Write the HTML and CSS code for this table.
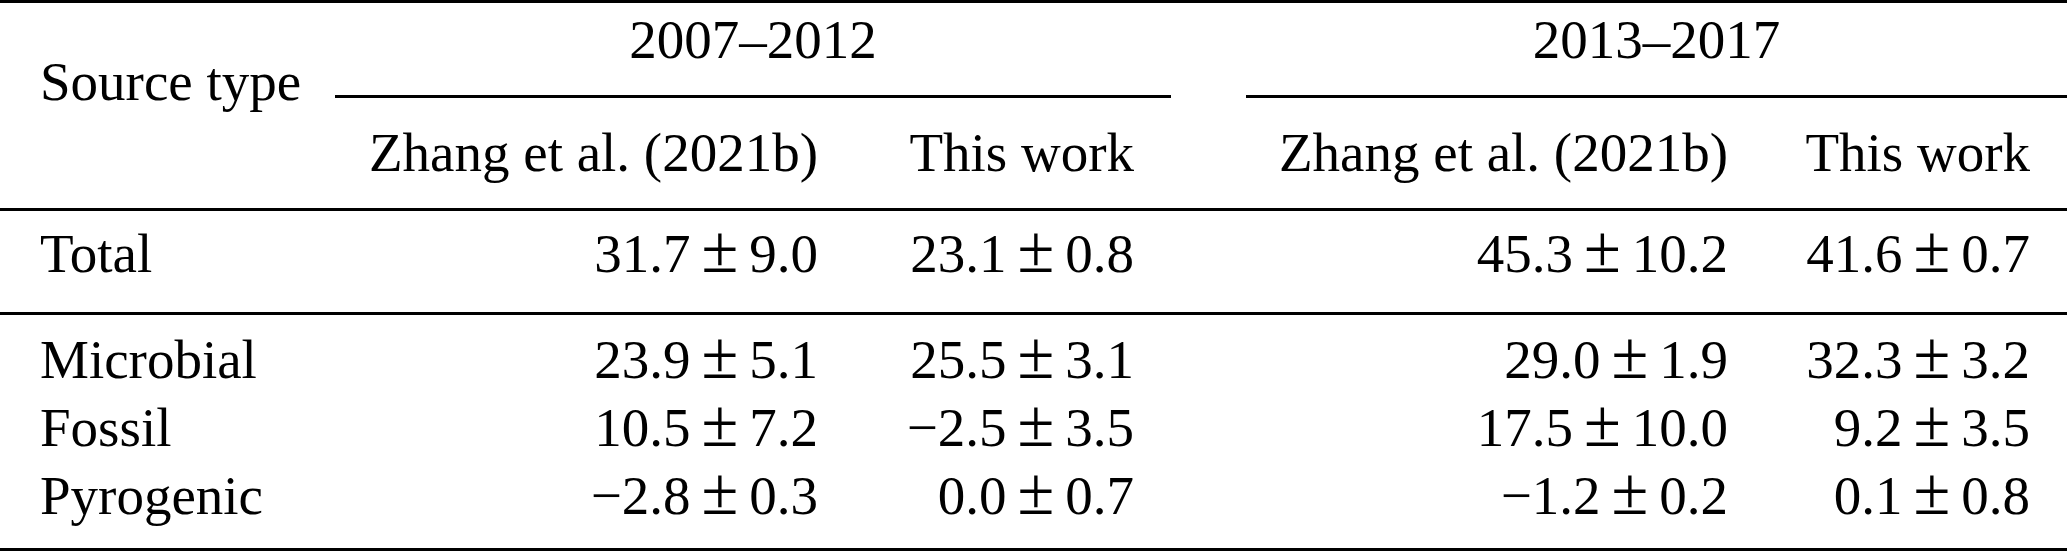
FILE: index.html
```html
<!DOCTYPE html>
<html lang="en">
<head>
    <meta charset="UTF-8">
    <meta name="viewport" content="width=device-width, initial-scale=1.0">
    <title>Source type estimates</title>
    <link rel="stylesheet" href="styles.css">
</head>
<body>
<table class="sources">
    <colgroup>
        <col class="c-name">
        <col class="c-ref">
        <col class="c-work">
        <col class="c-gap">
        <col class="c-ref2">
        <col class="c-work2">
    </colgroup>
    <thead>
        <tr class="periods">
            <th class="source" rowspan="2">Source type</th>
            <th class="period" colspan="2">2007–2012</th>
            <th class="gap" rowspan="2"></th>
            <th class="period" colspan="2">2013–2017</th>
        </tr>
        <tr class="refs">
            <th class="num">Zhang et al. (2021b)</th>
            <th class="num">This work</th>
            <th class="num">Zhang et al. (2021b)</th>
            <th class="num">This work</th>
        </tr>
    </thead>
    <tbody class="total">
        <tr>
            <td class="name">Total</td>
            <td class="num">31.7<span class="pm">±</span>9.0</td>
            <td class="num">23.1<span class="pm">±</span>0.8</td>
            <td class="gap"></td>
            <td class="num">45.3<span class="pm">±</span>10.2</td>
            <td class="num">41.6<span class="pm">±</span>0.7</td>
        </tr>
    </tbody>
    <tbody class="parts">
        <tr class="first">
            <td class="name">Microbial</td>
            <td class="num">23.9<span class="pm">±</span>5.1</td>
            <td class="num">25.5<span class="pm">±</span>3.1</td>
            <td class="gap"></td>
            <td class="num">29.0<span class="pm">±</span>1.9</td>
            <td class="num">32.3<span class="pm">±</span>3.2</td>
        </tr>
        <tr>
            <td class="name">Fossil</td>
            <td class="num">10.5<span class="pm">±</span>7.2</td>
            <td class="num">−2.5<span class="pm">±</span>3.5</td>
            <td class="gap"></td>
            <td class="num">17.5<span class="pm">±</span>10.0</td>
            <td class="num">9.2<span class="pm">±</span>3.5</td>
        </tr>
        <tr class="last">
            <td class="name">Pyrogenic</td>
            <td class="num">−2.8<span class="pm">±</span>0.3</td>
            <td class="num">0.0<span class="pm">±</span>0.7</td>
            <td class="gap"></td>
            <td class="num">−1.2<span class="pm">±</span>0.2</td>
            <td class="num">0.1<span class="pm">±</span>0.8</td>
        </tr>
    </tbody>
</table>
</body>
</html>
```

FILE: styles.css
```css
*{
    margin: 0;
    padding: 0;
    box-sizing: border-box;
}
body{
    background: #fff;
    color: #000;
    font-family: "Liberation Serif", "Times New Roman", serif;
    font-size: 55px;
}
.sources{
    width: 2067px;
    table-layout: fixed;
    border-collapse: separate;
    border-spacing: 0;
    border-top: 3px solid #000;
    border-bottom: 3px solid #000;
    line-height: 68px;
}
.c-name{ width: 335px; }
.c-ref{ width: 520px; }
.c-work{ width: 316px; }
.c-gap{ width: 75px; }
.c-ref2{ width: 519px; }
.c-work2{ width: 302px; }

th, td{
    font-weight: normal;
    white-space: nowrap;
    padding: 0;
}
.source, .name{
    text-align: left;
    padding-left: 40px;
}
.num{
    text-align: right;
    padding-right: 37px;
}
/* math-style plus-minus, a bit bigger than the text glyph */
.pm{
    font-size: 1.22em;
    line-height: 0;
    margin: 0 11px;
}

/* header rows */
.source{
    vertical-align: top;
    padding-top: 45px;
    border-bottom: 3px solid #000;
}
.gap{
    border-bottom: 3px solid #000;
}
.period{
    text-align: center;
    padding: 3px 0 21px;
    border-bottom: 3px solid #000;
}
.refs th{
    padding-top: 21px;
    padding-bottom: 21px;
    border-bottom: 3px solid #000;
}

/* total row */
.total td{
    padding-top: 9px;
    padding-bottom: 24px;
    border-bottom: 3px solid #000;
}

/* source rows */
.parts .gap{
    border-bottom: 0;
}
.parts .first td{
    padding-top: 11px;
}
.parts .last td{
    padding-bottom: 18px;
}
```
